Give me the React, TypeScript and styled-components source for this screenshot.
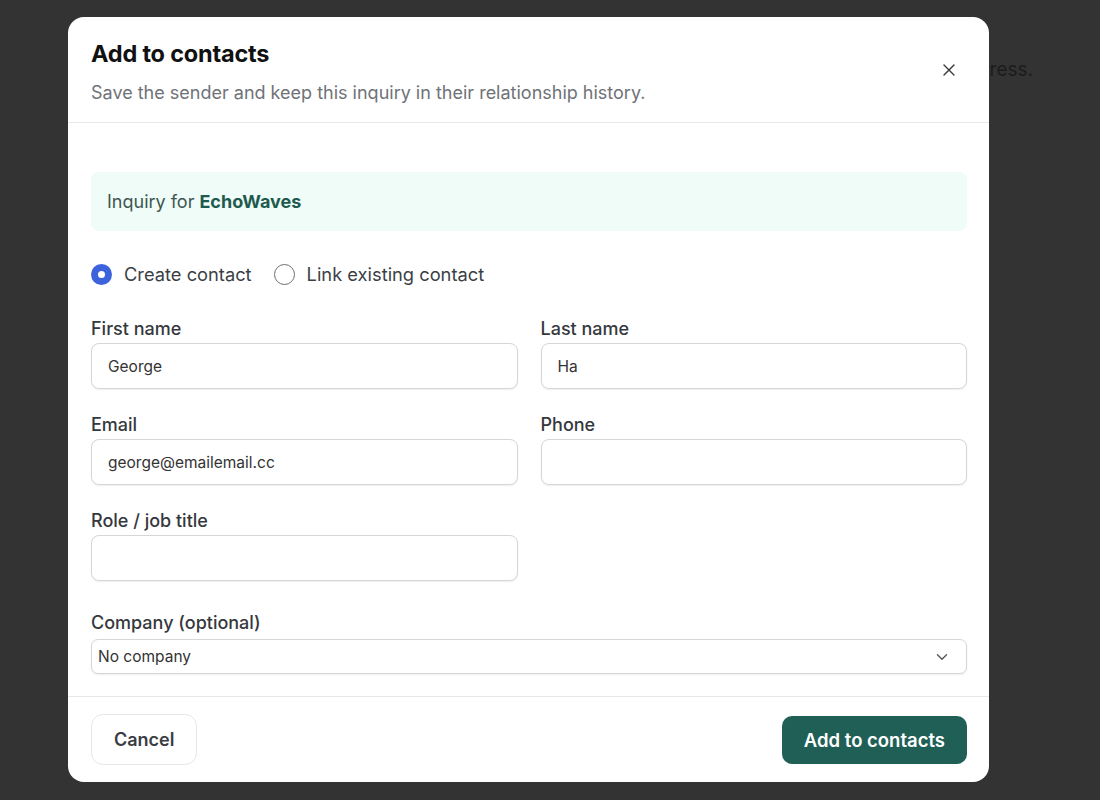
import React, { useState } from 'react';
import styled, { createGlobalStyle } from 'styled-components';
import { X, ChevronDown } from 'lucide-react';

const GlobalStyle = createGlobalStyle`
  html, body {
    margin: 0;
    padding: 0;
    background: #333333;
  }
  body {
    font-family: Inter, "Noto Sans", "Liberation Sans", sans-serif;
    -webkit-font-smoothing: antialiased;
  }
  * { box-sizing: border-box; }
`;

type Mode = 'create' | 'link';

export default function App() {
  const [mode, setMode] = useState<Mode>('create');

  return (
    <>
      <GlobalStyle />
      <Page>
        {/* dimmed page behind the dialog */}
        <Backdrop>
          <BackdropLine>Contacts are matched on the sender's email address.</BackdropLine>
        </Backdrop>

        <Overlay>
          <Modal role="dialog" aria-labelledby="add-contact-title">
            <Header>
              <HeaderText>
                <Title id="add-contact-title">Add to contacts</Title>
                <Subtitle>Save the sender and keep this inquiry in their relationship history.</Subtitle>
              </HeaderText>
              <CloseButton aria-label="Close">
                <X size={20} strokeWidth={1.6} />
              </CloseButton>
            </Header>

            <Body>
              <InquiryBox>
                Inquiry for <strong>EchoWaves</strong>
              </InquiryBox>

              <RadioRow>
                <RadioOption onClick={() => setMode('create')}>
                  <RadioDot checked={mode === 'create'} />
                  Create contact
                </RadioOption>
                <RadioOption onClick={() => setMode('link')}>
                  <RadioDot checked={mode === 'link'} />
                  Link existing contact
                </RadioOption>
              </RadioRow>

              <FieldGrid>
                <Field>
                  <Label>First name</Label>
                  <TextInput defaultValue="George" />
                </Field>
                <Field>
                  <Label>Last name</Label>
                  <TextInput defaultValue="Ha" />
                </Field>
                <Field>
                  <Label>Email</Label>
                  <TextInput defaultValue="george@emailemail.cc" />
                </Field>
                <Field>
                  <Label>Phone</Label>
                  <TextInput />
                </Field>
                <Field>
                  <Label>Role / job title</Label>
                  <TextInput />
                </Field>
              </FieldGrid>

              <CompanyField>
                <Label>Company (optional)</Label>
                <SelectWrap>
                  <Select defaultValue="">
                    <option value="">No company</option>
                    <option value="echowaves">EchoWaves</option>
                  </Select>
                  <SelectIcon>
                    <ChevronDown size={18} strokeWidth={1.8} />
                  </SelectIcon>
                </SelectWrap>
              </CompanyField>
            </Body>

            <Footer>
              <GhostButton>Cancel</GhostButton>
              <PrimaryButton>Add to contacts</PrimaryButton>
            </Footer>
          </Modal>
        </Overlay>
      </Page>
    </>
  );
}

const Page = styled.div`
  position: relative;
  width: 1100px;
  height: 800px;
  overflow: hidden;
  background: #333333;
`;

const Backdrop = styled.div`
  display: flex;
  justify-content: flex-end;
  padding: 57px 67px 0 0;
`;

const BackdropLine = styled.p`
  margin: 0;
  font-size: 19px;
  line-height: 26px;
  color: #1c1c1c;
`;

const Overlay = styled.div`
  position: absolute;
  inset: 0;
  display: flex;
  align-items: flex-start;
  padding: 17px 0 0 68px;
`;

const Modal = styled.div`
  width: 921px;
  height: 765px;
  background: #ffffff;
  border-radius: 16px;
  display: flex;
  flex-direction: column;
  overflow: hidden;
`;

const Header = styled.div`
  height: 106px;
  display: flex;
  align-items: center;
  justify-content: space-between;
  padding: 4px 24px 0 23px;
  border-bottom: 1px solid #e8e8e8;
`;

const HeaderText = styled.div`
  display: flex;
  flex-direction: column;
  gap: 12px;
`;

const Title = styled.h2`
  margin: 0;
  font-size: 23.5px;
  line-height: 30px;
  font-weight: 700;
  color: #111111;
  letter-spacing: -0.2px;
`;

const Subtitle = styled.p`
  margin: 0;
  font-size: 18px;
  line-height: 24px;
  color: #6f7378;
`;

const CloseButton = styled.button`
  width: 32px;
  height: 32px;
  margin-top: -4px;
  display: flex;
  align-items: center;
  justify-content: center;
  border: 0;
  background: transparent;
  color: #3a3a3a;
  cursor: pointer;
  padding: 0;
`;

const Body = styled.div`
  flex: 1;
  padding: 49px 22px 0 23px;
  border-bottom: 1px solid #e8e8e8;
`;

const InquiryBox = styled.div`
  height: 59px;
  display: flex;
  align-items: center;
  gap: 5px;
  padding: 0 16px;
  background: #effcf8;
  border-radius: 8px;
  font-size: 18px;
  color: #3d5651;

  strong {
    font-weight: 700;
    color: #1e5a4e;
  }
`;

const RadioRow = styled.div`
  display: flex;
  align-items: center;
  gap: 22px;
  margin-top: 31px;
  height: 24px;
`;

const RadioOption = styled.label`
  display: flex;
  align-items: center;
  gap: 12px;
  font-size: 18.3px;
  color: #3b3f45;
  cursor: pointer;
`;

const RadioDot = styled.span<{ checked: boolean }>`
  width: 21px;
  height: 21px;
  border-radius: 50%;
  display: inline-flex;
  align-items: center;
  justify-content: center;
  background: ${p => (p.checked ? '#3c62dc' : '#ffffff')};
  border: ${p => (p.checked ? '0' : '1.5px solid #6e6e73')};

  &::after {
    content: "";
    width: 7px;
    height: 7px;
    border-radius: 50%;
    background: #ffffff;
    display: ${p => (p.checked ? 'block' : 'none')};
  }
`;

const FieldGrid = styled.div`
  display: grid;
  grid-template-columns: 1fr 1fr;
  column-gap: 23px;
  row-gap: 25px;
  margin-top: 32px;
`;

const Field = styled.div`
  display: flex;
  flex-direction: column;
  gap: 3px;
`;

const Label = styled.label`
  font-size: 18px;
  line-height: 22px;
  font-weight: 450;
  color: #35383d;
`;

const TextInput = styled.input`
  height: 46px;
  width: 100%;
  border: 1px solid #d6d6d9;
  border-radius: 8px;
  padding: 0 16px;
  font-family: inherit;
  font-size: 15.5px;
  color: #333333;
  background: #ffffff;
  box-shadow: 0 1px 2px rgba(0, 0, 0, 0.07);
  outline: none;
`;

const CompanyField = styled.div`
  display: flex;
  flex-direction: column;
  gap: 5px;
  margin-top: 31px;
`;

const SelectWrap = styled.div`
  position: relative;
`;

const Select = styled.select`
  appearance: none;
  width: 100%;
  height: 35px;
  border: 1px solid #d6d6d9;
  border-radius: 7px;
  padding: 0 36px 0 6px;
  font-family: inherit;
  font-size: 15.5px;
  color: #333333;
  background: #ffffff;
  box-shadow: 0 1px 2px rgba(0, 0, 0, 0.07);
  outline: none;
`;

const SelectIcon = styled.span`
  position: absolute;
  right: 16px;
  top: 50%;
  transform: translateY(-50%);
  display: flex;
  color: #555555;
  pointer-events: none;
`;

const Footer = styled.div`
  height: 85px;
  display: flex;
  align-items: center;
  justify-content: space-between;
  padding: 0 22px 0 23px;
`;

const GhostButton = styled.button`
  height: 51px;
  padding: 0 22px;
  border: 1px solid #e6e6e8;
  border-radius: 12px;
  background: #ffffff;
  font-family: inherit;
  font-size: 18px;
  font-weight: 600;
  color: #3a3d42;
  cursor: pointer;
`;

const PrimaryButton = styled.button`
  height: 48px;
  padding: 0 22px;
  border: 0;
  border-radius: 10px;
  background: #1f5f56;
  font-family: inherit;
  font-size: 18.5px;
  font-weight: 600;
  color: #ffffff;
  cursor: pointer;
`;
